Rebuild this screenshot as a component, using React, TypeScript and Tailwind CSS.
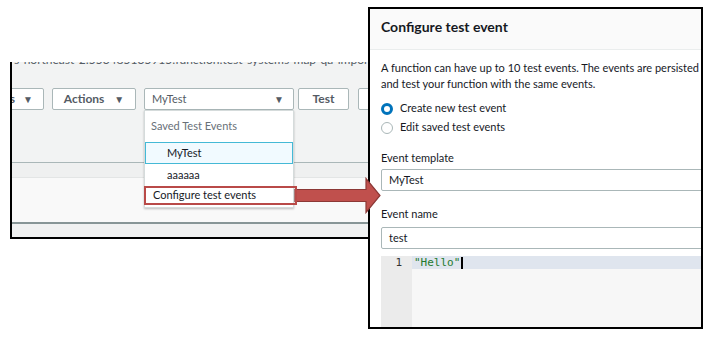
import React from "react";

const sans = "font-['Lato','Open_Sans',sans-serif]";

function Caret() {
  return <span className="text-[10px] leading-none text-[#545b64]">▼</span>;
}

function ConsoleShot() {
  return (
    <div className="absolute left-[10px] top-[62px] w-[362px] h-[177px] overflow-hidden border-l-2 border-b-2 border-black bg-[#f2f3f3]">
      {/* clipped ARN line at the top */}
      <div className="h-[5px] overflow-hidden">
        <div className="mt-[-8px] whitespace-nowrap text-[12px] leading-[12px] text-[#545b64] pl-[2px]">
          s-northeast-2:553485135915:function:test-systems-map-qa-import-info-b
        </div>
      </div>

      {/* toolbar */}
      <div className="mt-[21px] flex items-center h-[22px]">
        <div className="shrink-0 ml-[-43px] w-[75px] h-[22px] flex items-center justify-end gap-2 pr-[10px] bg-white border border-[#aab7b8] rounded-[2px] text-[12px] font-bold text-[#545b64]">
          Qualifiers <Caret />
        </div>
        <div className="shrink-0 ml-[8px] w-[84px] h-[22px] flex items-center justify-center gap-[10px] bg-white border border-[#aab7b8] rounded-[2px] text-[12px] font-bold text-[#545b64]">
          Actions <Caret />
        </div>
        <div className="shrink-0 relative ml-[8px] w-[150px] h-[22px]">
          <div className="h-full flex items-center justify-between pl-[7px] pr-[9px] bg-white border border-[#aab7b8] rounded-[2px] text-[11px] text-[#545b64]">
            MyTest <Caret />
          </div>
          {/* open dropdown */}
          <div className="absolute left-0 top-[22px] w-[150px] h-[98px] bg-white border border-[#d5dbdb] shadow-[0_1px_2px_rgba(0,0,0,0.25)] z-10 text-[11px]">
            <div className="h-[31px] flex items-center pl-[6px] text-[#687078]">Saved Test Events</div>
            <div className="h-[22px] flex items-center pl-[21px] bg-[#f1faff] border border-[#44b9d6] text-[#16191f]">MyTest</div>
            <div className="h-[22px] flex items-center pl-[22px] text-[#16191f]">aaaaaa</div>
            <div className="ml-[-1px] w-[153px] h-[19px] flex items-center pl-[7px] border-2 border-[#b94a48] text-[#16191f]">
              Configure test events
            </div>
          </div>
        </div>
        <div className="shrink-0 ml-[4px] w-[51px] h-[22px] flex items-center justify-center bg-white border border-[#aab7b8] rounded-[2px] text-[12px] font-bold text-[#545b64]">
          Test
        </div>
        <div className="shrink-0 ml-[9px] w-[60px] h-[22px] bg-white border border-[#aab7b8] rounded-[2px]" />
      </div>

      {/* page sections below the toolbar */}
      <div className="mt-[52px] border-t border-[#aab7b8] h-[15px] bg-[#eff0f0]" />
      <div className="border-t border-[#e3e5e5] h-[45px] bg-[#f9f9f9]" />
      <div className="border-t-2 border-[#879596] h-[16px] bg-[#f0f1f1]" />
    </div>
  );
}

function Arrow() {
  return (
    <svg className="absolute left-[294px] top-[177px]" width="88" height="37" viewBox="0 0 88 37">
      <path
        d="M1 12.5 H72 V1.5 L86 18.5 L72 35.5 V24.5 H1 Z"
        fill="#c0504d"
        stroke="#8c3836"
        strokeWidth="1.2"
      />
    </svg>
  );
}

function Radio({ checked, label }: { checked?: boolean; label: string }) {
  return (
    <div className="flex items-center gap-[7px] h-[19px]">
      {checked ? (
        <span className="w-[12px] h-[12px] rounded-full border-[3.5px] border-[#0073bb] bg-white" />
      ) : (
        <span className="w-[12px] h-[12px] rounded-full border border-[#aab7b8] bg-white" />
      )}
      <span className="text-[11px] text-[#16191f]">{label}</span>
    </div>
  );
}

function ConfigurePanel() {
  return (
    <div className="absolute left-[368px] top-[7px] w-[335px] h-[322px] overflow-hidden bg-white border-2 border-black">
      <div className="h-[41px] flex items-center pl-[11px] pb-[6px] bg-[#fafafa] border-b border-[#eaeded]">
        <span className="text-[14px] font-bold text-[#16191f]">Configure test event</span>
      </div>
      <div className="pl-[11px]">
        <p className="mt-[10px] whitespace-nowrap text-[11px] leading-[16px] text-[#16191f]">
          A function can have up to 10 test events. The events are persisted so you can switch to another computer
          <br />
          and test your function with the same events.
        </p>
        <div className="mt-[7px] flex flex-col">
          <Radio checked label="Create new test event" />
          <Radio label="Edit saved test events" />
        </div>
        <div className="mt-[13px] text-[11px] text-[#16191f] h-[16px] leading-[16px]">Event template</div>
        <div className="mt-[3px] w-[400px] h-[22px] flex items-center pl-[7px] border border-[#aab7b8] rounded-[2px] text-[11px] text-[#16191f]">
          MyTest
        </div>
        <div className="mt-[15px] text-[11px] text-[#16191f] h-[16px] leading-[16px]">Event name</div>
        <div className="mt-[5px] w-[400px] h-[22px] flex items-center pl-[7px] border border-[#aab7b8] rounded-[2px] text-[11px] text-[#16191f]">
          test
        </div>
        <div className="mt-[7px] w-[400px] h-[80px] flex bg-[#f7f7f7]">
          <div className="w-[31px] bg-[#ebebeb] flex justify-end pr-[10px]">
            <span className="h-[13px] leading-[13px] text-[11px] text-[#333] font-['DejaVu_Sans_Mono',monospace]">1</span>
          </div>
          <div className="flex-1">
            <div className="h-[13px] flex items-center pl-[2px] bg-[#dfe5ee] font-['DejaVu_Sans_Mono',monospace] text-[11px] leading-[13px] text-[#1e7a2e]">
              "Hello"<span className="ml-[1px] w-[2px] h-[12px] bg-black" />
            </div>
          </div>
        </div>
      </div>
    </div>
  );
}

export default function App() {
  return (
    <div className={`relative w-[708px] h-[351px] overflow-hidden bg-white ${sans}`}>
      <ConsoleShot />
      <ConfigurePanel />
      <Arrow />
    </div>
  );
}
